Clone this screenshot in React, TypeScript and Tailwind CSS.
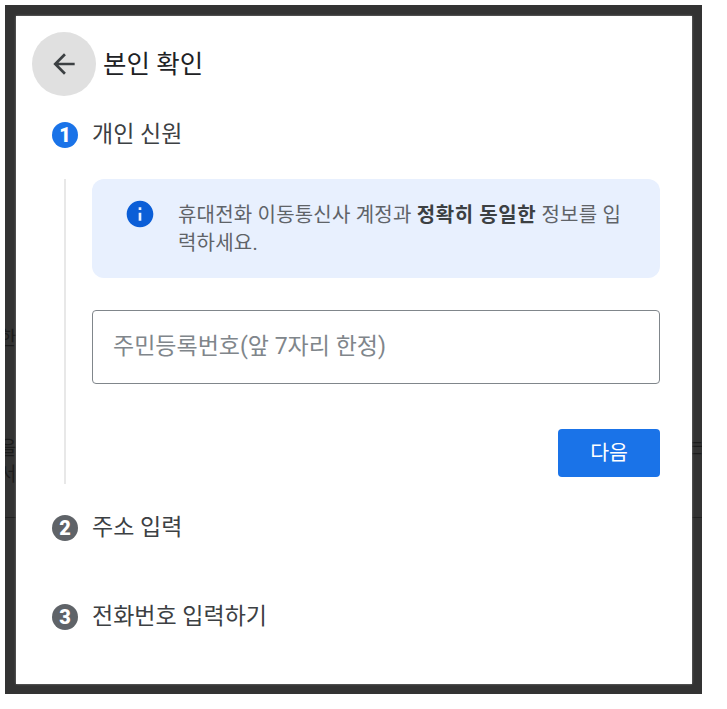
const font = "font-['Roboto','Noto_Sans_CJK_KR',sans-serif]";

function StepBadge({ n, active }: { n: number; active?: boolean }) {
  return (
    <span
      className={`flex h-[26px] w-[26px] shrink-0 items-center justify-center rounded-full text-[20px] leading-none font-black text-white ${
        active ? "bg-[#1a73e8]" : "bg-[#5f6368]"
      }`}
    >
      {n}
    </span>
  );
}

function StepTitle({ n, label, active }: { n: number; label: string; active?: boolean }) {
  return (
    <div className="flex h-[26px] items-center gap-[14px] pl-[36px]">
      <StepBadge n={n} active={active} />
      <span className="text-[23px] leading-[26px] text-[#3c4043]">{label}</span>
    </div>
  );
}

export default function App() {
  return (
    <div className={`h-[709px] w-[727px] bg-white pt-[5px] pl-[5px] ${font}`}>
      <div className="relative h-[689px] w-[697px] overflow-hidden bg-[#333333] py-[11px] pr-[10px] pl-[11px]">
        {/* page text showing faintly through the dimmed backdrop */}
        <span className="absolute top-[320px] left-[-6px] text-[19px] text-[#1c1c1c]">한</span>
        <span className="absolute top-[430px] left-[-6px] text-[19px] text-[#1c1c1c]">을</span>
        <span className="absolute top-[456px] left-[-6px] text-[19px] text-[#1c1c1c]">서</span>
        <span className="absolute top-[428px] right-[-2px] text-[19px] text-[#1c1c1c]">는</span>
        <div className="absolute top-[512px] right-0 left-0 h-px bg-[#222222]" />

        <div className="relative h-[668px] w-[676px] bg-white pt-[16px] shadow-[0_0_2px_#888]">
          <div className="flex h-[64px] items-center gap-[7px] pl-[16px]">
            <button
              type="button"
              aria-label="뒤로"
              className="flex h-[64px] w-[64px] items-center justify-center rounded-full bg-[#e0e0e0] text-[#3c4043]"
            >
              <svg width="32" height="32" viewBox="0 0 24 24" fill="currentColor">
                <path d="M20 11H7.83l5.59-5.59L12 4l-8 8 8 8 1.41-1.41L7.83 13H20v-2z" />
              </svg>
            </button>
            <h1 className="text-[25.5px] leading-[32px] font-normal text-[#202124]">본인 확인</h1>
          </div>

          <div className="mt-[26px]">
            <StepTitle n={1} label="개인 신원" active />
          </div>

          <div className="mt-[31px] ml-[48px] h-[305px] border-l-2 border-[#e8e8e8] pr-[32px] pl-[26px]">
            <div className="flex h-[99px] gap-[22px] rounded-[12px] bg-[#e8f0fe] pt-[22px] pr-[32px] pl-[32px]">
              <svg className="mt-[-3px] shrink-0" width="32" height="32" viewBox="0 0 24 24" fill="#0b5ed7">
                <path d="M12 2C6.48 2 2 6.48 2 12s4.48 10 10 10 10-4.48 10-10S17.52 2 12 2zm1 15h-2v-6h2v6zm0-8h-2V7h2v2z" />
              </svg>
              <p className="text-[20px] leading-[28px] tracking-[0.2px] break-all text-[#5f6368]">
                휴대전화 이동통신사 계정과 <b className="font-bold tracking-[0.6px] text-[#3c4043]">정확히 동일한</b> 정보를 입력하세요.
              </p>
            </div>

            <div className="mt-[32px] flex h-[74px] items-center rounded-[4px] border border-[#80868b] bg-white pl-[20px]">
              <span className="text-[23px] text-[#80868b]">주민등록번호(앞 7자리 한정)</span>
            </div>

            <div className="mt-[45px] flex justify-end">
              <button
                type="button"
                className="h-[48px] w-[102px] rounded-[4px] bg-[#1a73e8] pt-px text-[20.5px] text-white"
              >
                다음
              </button>
            </div>
          </div>

          <div className="mt-[31px]">
            <StepTitle n={2} label="주소 입력" />
          </div>
          <div className="mt-[63px]">
            <StepTitle n={3} label="전화번호 입력하기" />
          </div>
        </div>
      </div>
    </div>
  );
}
